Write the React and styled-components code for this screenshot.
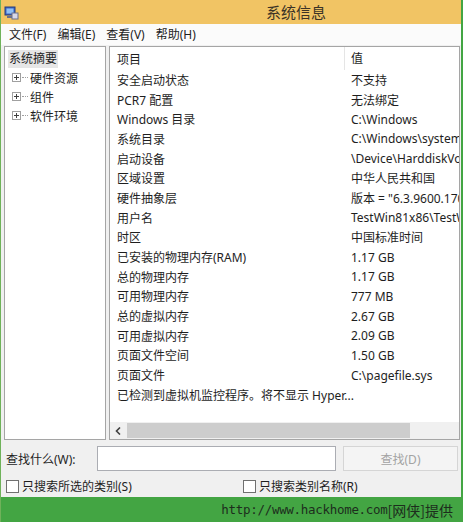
import React from 'react';
import styled, { createGlobalStyle } from 'styled-components';

const GlobalStyle = createGlobalStyle`
    html, body {
        margin: 0;
        padding: 0;
        background: #43a543;
    }
    body {
        font-family: "Noto Sans", "Noto Sans CJK SC", sans-serif;
        font-size: 12px;
        color: #1e1e1e;
    }
`

const Window = styled.div`
    width: 463px;
    height: 522px;
    box-sizing: border-box;
    border-left: 1px solid #6fb25a;
    border-right: 2px solid #43a543;
    display: flex;
    flex-direction: column;
    overflow: hidden;
`

const TitleBar = styled.div`
    height: 24px;
    flex: none;
    background: #f1c464;
    display: flex;
    align-items: center;
    position: relative;
    padding-left: 3px;
    h1{
        margin: 0;
        position: absolute;
        left: 265px;
        top: 1px;
        font-size: 15px;
        font-weight: normal;
        color: #3b3326;
        font-family: "Noto Sans CJK SC", sans-serif;
    }
`

const MenuBar = styled.div`
    height: 21px;
    flex: none;
    background: #fbfbfb;
    display: flex;
    align-items: center;
    padding-left: 3px;
`

const MenuItem = styled.span`
    padding: 0 5px;
    font-size: 12px;
    line-height: 20px;
    margin-right: 1px;
`

const Body = styled.div`
    flex: 1;
    background: #f0f0f0;
    display: flex;
    flex-direction: column;
    padding: 1px 1px 0 3px;
`

const Panes = styled.div`
    height: 394px;
    flex: none;
    display: flex;
    gap: 3px;
`

const TreePane = styled.div`
    width: 102px;
    background: #fff;
    border: 1px solid #a5a5a5;
    box-sizing: border-box;
    padding: 3px 0 0 3px;
`

const TreeRoot = styled.div`
    display: inline-block;
    background: #e6e6e6;
    padding: 0 1px;
    line-height: 18px;
`

const TreeNode = styled.div`
    display: flex;
    align-items: center;
    height: 19px;
    padding-left: 4px;
`

const Expander = styled.span`
    width: 7px;
    height: 7px;
    border: 1px solid #a0a0a0;
    position: relative;
    flex: none;
    &::before{
        content: '';
        position: absolute;
        left: 1px;
        top: 3px;
        width: 5px;
        height: 1px;
        background: #404040;
    }
    &::after{
        content: '';
        position: absolute;
        left: 3px;
        top: 1px;
        width: 1px;
        height: 5px;
        background: #404040;
    }
`

const Dots = styled.span`
    width: 6px;
    border-top: 1px dotted #a0a0a0;
    margin: 0 2px 0 1px;
`

const ListPane = styled.div`
    flex: 1;
    background: #fff;
    border: 1px solid #a5a5a5;
    box-sizing: border-box;
    display: flex;
    flex-direction: column;
`

const Rows = styled.div`
    flex: 1;
    overflow: hidden;
`

const Row = styled.div`
    display: grid;
    grid-template-columns: 234px 1fr;
    height: ${p => p.head ? '23px' : '19.7px'};
    align-items: center;
    white-space: nowrap;
    span{
        padding-left: 7px;
        overflow: hidden;
    }
    span:only-child{
        grid-column: 1 / -1;
    }
    span + span{
        padding-left: 6px;
        border-left: ${p => p.head ? '1px solid #e5e5e5' : 'none'};
        height: ${p => p.head ? '23px' : 'auto'};
        line-height: ${p => p.head ? '23px' : 'normal'};
        margin-left: ${p => p.head ? '0' : '1px'};
    }
`

const HScroll = styled.div`
    height: 17px;
    flex: none;
    background: #f0f0f0;
    display: flex;
    align-items: center;
`

const ScrollArrow = styled.span`
    width: 17px;
    display: flex;
    justify-content: center;
`

const Thumb = styled.div`
    width: 283px;
    height: 15px;
    background: #cdcdcd;
`

const SearchRow = styled.div`
    display: flex;
    align-items: center;
    margin-top: 6px;
    height: 25px;
    padding-left: 2px;
`

const Label = styled.span`
    width: 91px;
`

const SearchInput = styled.input`
    width: 239px;
    height: 25px;
    box-sizing: border-box;
    border: 1px solid #abadb3;
    background: #fff;
    outline: none;
`

const FindButton = styled.button`
    margin-left: 7px;
    width: 115px;
    height: 25px;
    border: 1px solid #d5d5d5;
    background: #f4f4f4;
    color: #a3a3a3;
    font-family: inherit;
    font-size: 12px;
`

const CheckRow = styled.div`
    display: flex;
    align-items: center;
    height: 22px;
    margin-top: 4px;
    padding-left: 2px;
`

const Check = styled.label`
    display: flex;
    align-items: center;
    gap: 3px;
    width: ${p => p.w}px;
    i{
        width: 11px;
        height: 11px;
        border: 1px solid #707070;
        background: #fff;
    }
`

const Footer = styled.div`
    height: 25px;
    flex: none;
    background: #43a543;
    display: flex;
    align-items: center;
    justify-content: flex-end;
    padding-right: 8px;
    font-family: "DejaVu Sans Mono", "Noto Sans CJK SC", monospace;
    font-size: 12.5px;
    color: #1d2d1d;
    letter-spacing: -0.3px;
    b{
        font-weight: normal;
        font-family: "Noto Sans CJK SC", sans-serif;
        font-size: 14px;
        letter-spacing: 0;
    }
`

const rows = [
    ['安全启动状态', '不支持'],
    ['PCR7 配置', '无法绑定'],
    ['Windows 目录', 'C:\\Windows'],
    ['系统目录', 'C:\\Windows\\system32'],
    ['启动设备', '\\Device\\HarddiskVolume1'],
    ['区域设置', '中华人民共和国'],
    ['硬件抽象层', '版本 = "6.3.9600.17031"'],
    ['用户名', 'TestWin81x86\\TestWin'],
    ['时区', '中国标准时间'],
    ['已安装的物理内存(RAM)', '1.17 GB'],
    ['总的物理内存', '1.17 GB'],
    ['可用物理内存', '777 MB'],
    ['总的虚拟内存', '2.67 GB'],
    ['可用虚拟内存', '2.09 GB'],
    ['页面文件空间', '1.50 GB'],
    ['页面文件', 'C:\\pagefile.sys'],
    ['已检测到虚拟机监控程序。将不显示 Hyper...', null],
]

const AppIcon = () => (
    <svg width="15" height="15" viewBox="0 0 15 15">
        <rect x="1" y="2" width="10" height="8" fill="#3a66c4" stroke="#283c7a" strokeWidth="1" />
        <rect x="2.5" y="3.5" width="7" height="5" fill="#8fc0f5" />
        <rect x="8" y="8" width="6" height="6" fill="#d8d8e8" stroke="#6b6f8a" strokeWidth="1" />
        <rect x="3" y="11" width="5" height="2" fill="#6b6f8a" />
    </svg>
)

const App = () => {
    return (
        <>
            <GlobalStyle />
            <Window>
                <TitleBar>
                    <AppIcon />
                    <h1>系统信息</h1>
                </TitleBar>
                <MenuBar>
                    <MenuItem>文件(F)</MenuItem>
                    <MenuItem>编辑(E)</MenuItem>
                    <MenuItem>查看(V)</MenuItem>
                    <MenuItem>帮助(H)</MenuItem>
                </MenuBar>
                <Body>
                    <Panes>
                        <TreePane>
                            <TreeRoot>系统摘要</TreeRoot>
                            {['硬件资源', '组件', '软件环境'].map(t => (
                                <TreeNode key={t}>
                                    <Expander />
                                    <Dots />
                                    {t}
                                </TreeNode>
                            ))}
                        </TreePane>
                        <ListPane>
                            <Rows>
                                <Row head>
                                    <span>项目</span>
                                    <span>值</span>
                                </Row>
                                {rows.map(([k, v]) => (
                                    <Row key={k}>
                                        <span>{k}</span>
                                        {v !== null && <span>{v}</span>}
                                    </Row>
                                ))}
                            </Rows>
                            <HScroll>
                                <ScrollArrow>
                                    <svg width="7" height="8" viewBox="0 0 7 8">
                                        <path d="M5 0.5 L1.5 4 L5 7.5" fill="none" stroke="#404040" strokeWidth="1.6" />
                                    </svg>
                                </ScrollArrow>
                                <Thumb />
                            </HScroll>
                        </ListPane>
                    </Panes>
                    <SearchRow>
                        <Label>查找什么(W):</Label>
                        <SearchInput />
                        <FindButton disabled>查找(D)</FindButton>
                    </SearchRow>
                    <CheckRow>
                        <Check w={237}><i />只搜索所选的类别(S)</Check>
                        <Check><i />只搜索类别名称(R)</Check>
                    </CheckRow>
                </Body>
                <Footer>http://www.hackhome.com<b>[网侠]提供</b></Footer>
            </Window>
        </>
    );
};

export default App;
